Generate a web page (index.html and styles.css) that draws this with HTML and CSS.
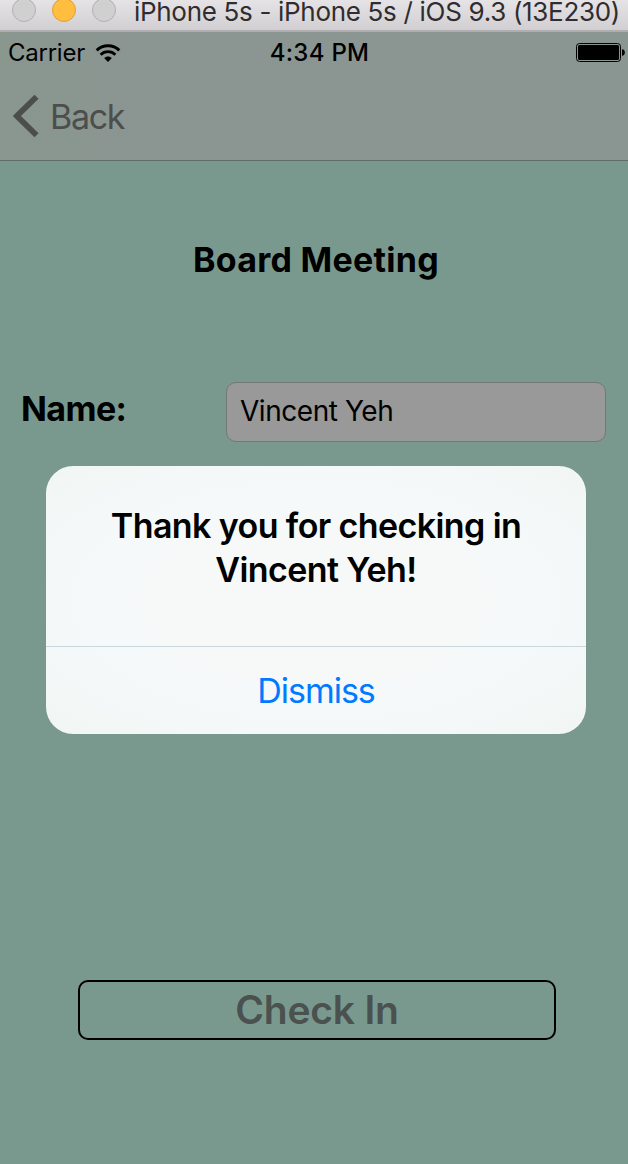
FILE: index.html
```html
<!DOCTYPE html>
<html lang="en">
<head>
<meta charset="utf-8">
<title>Board Meeting</title>
<link rel="stylesheet" href="styles.css">
</head>
<body>
<div class="window">
  <header class="titlebar">
    <span class="light"></span>
    <span class="light light-minimize"></span>
    <span class="light"></span>
    <span class="window-title">iPhone 5s - iPhone 5s / iOS 9.3 (13E230)</span>
  </header>
  <div class="top">
    <div class="status">
      <div class="status-left">
        <span class="carrier">Carrier</span>
        <svg class="wifi" width="26" height="20" viewBox="0 0 26 20">
          <path d="M1.7 7.3C8 1.3 18 1.3 24.3 7.3" fill="none" stroke="#000" stroke-width="3"/>
          <path d="M5.6 11.7C9.7 7.7 16.3 7.7 20.4 11.7" fill="none" stroke="#000" stroke-width="2.7"/>
          <path d="M13 19L9.1 15.1C11.2 13 14.8 13 16.9 15.1Z"/>
        </svg>
      </div>
      <span class="time">4:34 PM</span>
      <div class="status-right">
        <svg width="50" height="20" viewBox="0 0 50 20">
          <rect x=".5" y=".5" width="44" height="18" rx="3" fill="none" stroke="#000"/>
          <rect x="2" y="2" width="41" height="15" rx="1.5"/>
          <path d="M46 6.2C49.8 6.2 49.8 12.8 46 12.8Z"/>
        </svg>
      </div>
    </div>
    <nav class="nav">
      <svg width="26" height="42" viewBox="0 0 26 42"><path d="M23.5 1.8L3.9 21L23.5 40.2" fill="none" stroke="#4c4e4d" stroke-width="5.8"/></svg>
      <span class="back">Back</span>
    </nav>
  </div>
  <main class="screen">
    <h1 class="heading">Board Meeting</h1>
    <div class="row">
      <label class="label">Name:</label>
      <div class="field"><span class="value">Vincent Yeh</span></div>
    </div>
    <button class="checkin"><span>Check In</span></button>
  </main>
  <div class="alert">
    <div class="message"><div class="line1">Thank you for checking in</div><div class="line2">Vincent Yeh!</div></div>
    <div class="action"><span class="dismiss">Dismiss</span></div>
  </div>
</div>
</body>
</html>
```
FILE: styles.css
```css
* { box-sizing: border-box; }
body { margin: 0; background: #7a998e; font-family: Inter, "Liberation Sans", sans-serif; color: #000; }
.window { position: relative; width: 628px; height: 1164px; overflow: hidden; display: flex; flex-direction: column; white-space: nowrap; }
.titlebar { height: 32px; display: flex; align-items: flex-start; padding-left: 12px; background: linear-gradient(#e6e3e6, #d2cfd2 30px, #b1aeb1 30px); }
.light { flex: none; width: 24px; height: 24px; margin: -2px 16px 0 0; border-radius: 50%; background: #d0d0d0; border: 1px solid #b2b0b2; }
.light-minimize { background: #ffbe40; border-color: #dfa037; }
.window-title { margin-left: 2px; font-size: 26px; line-height: 23px; color: #2f2d2f; letter-spacing: -.31px; }
.top { height: 129px; background: linear-gradient(90deg, #89978f, #8b9592 25%, #8b9592 75%, #899691); border-bottom: 1px solid #5d6e67; }
.status { display: grid; grid-template-columns: 1fr auto 1fr; height: 41px; align-items: center; padding: 0 2px 0 8px; font-size: 24px; line-height: 30px; }
.status-left { display: flex; align-items: center; gap: 10px; }
.carrier { letter-spacing: -.25px; }
.time { padding-left: 5px; font-weight: 550; letter-spacing: .3px; }
.status-right { display: flex; justify-content: flex-end; }
.nav { display: flex; align-items: center; height: 86px; padding-left: 13px; gap: 11px; color: #4c4e4d; font-size: 34px; letter-spacing: -1.3px; }
.screen { flex: 1; display: flex; flex-direction: column; }
.heading { margin: 78px 0 0; padding-left: 4px; text-align: center; font-size: 34px; line-height: 42px; font-weight: 700; letter-spacing: .27px; }
.row { display: flex; height: 60px; margin: 101px 22px 0 20px; }
.label { width: 206px; flex: none; padding-left: 1px; font-size: 34px; font-weight: 700; line-height: 54px; letter-spacing: -.6px; }
.field { flex: 1; border: 1px solid #707976; border-radius: 10px; background: #999; padding-left: 13px; font-size: 28px; line-height: 57px; letter-spacing: -.45px; }
.checkin { width: 478px; height: 60px; margin: 538px 0 0 78px; padding: 0; border: 2px solid #000; border-radius: 10px; background: transparent; color: #4a514e; font: 600 39px/56px Inter, sans-serif; letter-spacing: -.2px; }
.alert { position: absolute; left: 46px; top: 466px; width: 540px; height: 268px; border-radius: 27px; background: radial-gradient(ellipse at center, #f7f9f8 35%, #f5f9fa 60%, #f1f6f4 100%); font-size: 34px; text-align: center; }
.message { height: 181px; padding-top: 38px; border-bottom: 1px solid #cbd8db; line-height: 44px; font-weight: 580; letter-spacing: -.6px; }
.action { line-height: 88px; height: 87px; color: #007aff; letter-spacing: -1px; }
```
